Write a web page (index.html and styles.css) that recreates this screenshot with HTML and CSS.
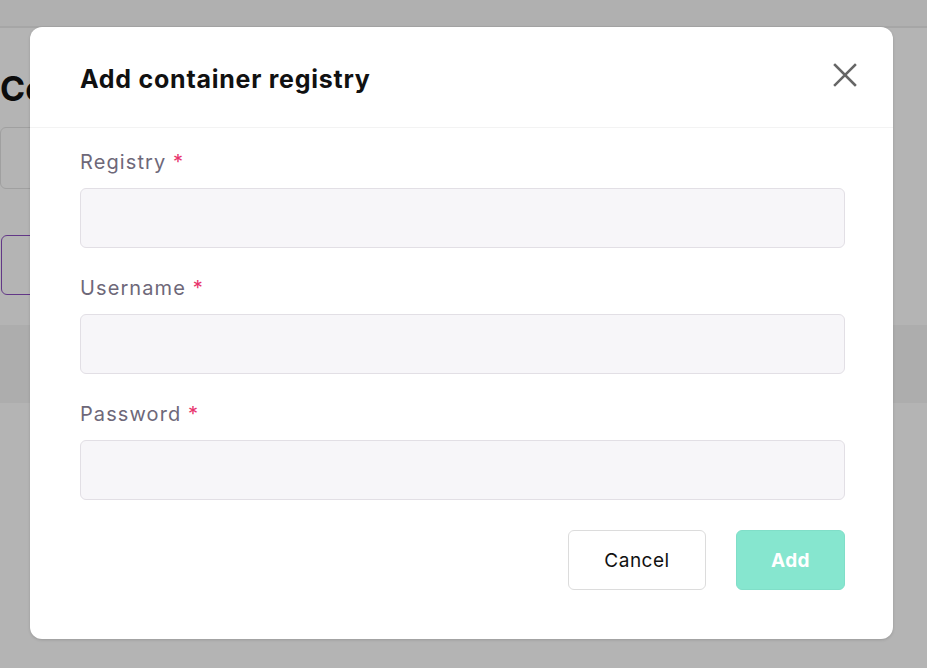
FILE: index.html
```html
<!DOCTYPE html>
<html lang="en">
<head>
<meta charset="utf-8">
<title>Add container registry</title>
<link rel="stylesheet" href="styles.css">
</head>
<body>
<div class="page">
  <div class="topbar"></div>
  <div class="content">
    <h1 class="page-title">Co</h1>
    <div class="search"></div>
    <div class="outline-btn"></div>
  </div>
  <div class="table-head"></div>
</div>
<div class="overlay"></div>
<div class="modal" role="dialog" aria-labelledby="dlg-title">
  <div class="modal-header">
    <h2 id="dlg-title" class="modal-title">Add container registry</h2>
    <button class="close" aria-label="Close">
      <svg width="24" height="24" viewBox="0 0 24 24" fill="none" stroke="#666" stroke-width="2.5" stroke-linecap="square"><path d="M2 2 L22 22 M22 2 L2 22"/></svg>
    </button>
  </div>
  <div class="modal-body">
    <div class="field">
      <label class="label">Registry <span class="req">*</span></label>
      <div class="input"></div>
    </div>
    <div class="field">
      <label class="label">Username <span class="req">*</span></label>
      <div class="input"></div>
    </div>
    <div class="field">
      <label class="label">Password <span class="req">*</span></label>
      <div class="input"></div>
    </div>
    <div class="actions">
      <button class="btn btn-cancel">Cancel</button>
      <button class="btn btn-add">Add</button>
    </div>
  </div>
</div>
</body>
</html>
```
FILE: styles.css
```css
* { box-sizing: border-box; }
html, body { margin: 0; padding: 0; }
body {
  width: 927px;
  height: 668px;
  overflow: hidden;
  font-family: Inter, "Noto Sans", sans-serif;
  background: #fff;
  position: relative;
}
.page { display: flex; flex-direction: column; }
.topbar {
  height: 28px;
  background: #fafafa;
  border-bottom: 2px solid #ececec;
}
.content {
  display: flex;
  flex-direction: column;
  align-items: flex-start;
}
.page-title {
  margin: 41px 0 0 0;
  font-size: 34px;
  font-weight: 700;
  line-height: 40px;
  color: #111;
  white-space: nowrap;
}
.search {
  margin-top: 18px;
  width: 300px;
  height: 62px;
  border: 1px solid #e3e3e3;
  border-radius: 6px;
}
.outline-btn {
  margin-top: 46px;
  margin-left: 1px;
  width: 200px;
  height: 60px;
  border: 1.5px solid #8c4fc0;
  border-radius: 6px;
}
.table-head {
  margin-top: 30px;
  height: 78px;
  background: #f5f5f5;
}
.overlay {
  position: absolute;
  inset: 0;
  background: rgba(0, 0, 0, 0.295);
}
.modal {
  position: absolute;
  left: 30px;
  top: 27px;
  width: 863px;
  height: 612px;
  background: #fff;
  border-radius: 12px;
  box-shadow: 0 1px 3px rgba(0,0,0,0.15);
  display: flex;
  flex-direction: column;
}
.modal-header {
  height: 101px;
  border-bottom: 1px solid #f3f3f3;
  display: flex;
  align-items: center;
  justify-content: space-between;
  padding: 0 36px 0 50px;
}
.modal-title {
  margin: 0;
  font-size: 25px;
  font-weight: 700;
  color: #111;
  letter-spacing: 0.75px;
  padding-top: 3px;
}
.close {
  border: 0;
  background: none;
  padding: 0;
  width: 24px;
  height: 24px;
  display: flex;
  margin-bottom: 4px;
}
.modal-body {
  padding: 22px 48px 0 50px;
  display: flex;
  flex-direction: column;
}
.field { display: flex; flex-direction: column; margin-bottom: 28px; }
.label {
  font-size: 20px;
  line-height: 24px;
  color: #6e6879;
  letter-spacing: 1.1px;
  margin-bottom: 14px;
}
.req { color: #e8336d; }
.input {
  height: 60px;
  background: #f7f6f9;
  border: 1px solid #e2dfe5;
  border-radius: 6px;
}
.actions {
  display: flex;
  justify-content: flex-end;
  gap: 30px;
  margin-top: 2px;
}
.btn {
  height: 60px;
  border-radius: 6px;
  font-family: Inter, "Noto Sans", sans-serif;
  font-size: 19px;
}
.btn-cancel {
  width: 138px;
  background: #fff;
  border: 1px solid #dcdcdc;
  color: #111;
  font-weight: 400;
  letter-spacing: 0.5px;
}
.btn-add {
  width: 109px;
  background: #86e6cf;
  border: 1px solid #80dec8;
  color: #fff;
  font-weight: 700;
  letter-spacing: 0.5px;
}
```
